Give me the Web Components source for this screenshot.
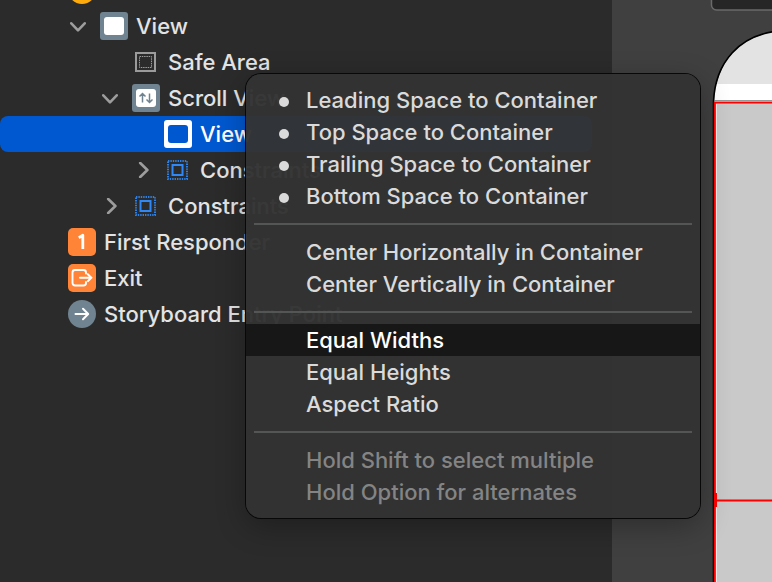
<!DOCTYPE html>
<html lang="en">
<head>
<meta charset="utf-8">
<title>Interface Builder</title>
<style>
html, body { margin: 0; height: 100%; }
body { background: #2b2b2b; font-family: Inter, "Liberation Sans", sans-serif; font-size: 22px; font-weight: 450; overflow: hidden; }
</style>
</head>
<body>
<ib-window>
  <outline-panel slot="outline">
    <outline-row level="1" icon="controller"></outline-row>
    <outline-row level="2" icon="view" state="open">View</outline-row>
    <outline-row level="3" icon="safe">Safe Area</outline-row>
    <outline-row level="3" icon="scroll" state="open">Scroll View</outline-row>
    <outline-row level="4" icon="viewsel" selected>View</outline-row>
    <outline-row level="4" icon="constraints" state="closed">Constraints</outline-row>
    <outline-row level="3" icon="constraints" state="closed">Constraints</outline-row>
    <outline-row level="1" icon="responder">First Responder</outline-row>
    <outline-row level="1" icon="exit">Exit</outline-row>
    <outline-row level="1" icon="entry">Storyboard Entry Point</outline-row>
  </outline-panel>
  <design-canvas slot="canvas"></design-canvas>
  <context-menu slot="menu">
    <menu-item checked>Leading Space to Container</menu-item>
    <menu-item checked>Top Space to Container</menu-item>
    <menu-item checked>Trailing Space to Container</menu-item>
    <menu-item checked>Bottom Space to Container</menu-item>
    <menu-separator></menu-separator>
    <menu-item>Center Horizontally in Container</menu-item>
    <menu-item>Center Vertically in Container</menu-item>
    <menu-separator></menu-separator>
    <menu-item active>Equal Widths</menu-item>
    <menu-item>Equal Heights</menu-item>
    <menu-item>Aspect Ratio</menu-item>
    <menu-separator></menu-separator>
    <menu-item disabled>Hold Shift to select multiple</menu-item>
    <menu-item disabled>Hold Option for alternates</menu-item>
  </context-menu>
</ib-window>
<script>
const define = (name, html, setup) => customElements.define(name, class extends HTMLElement {
  connectedCallback() {
    if (this.shadowRoot) return;
    const root = this.attachShadow({ mode: 'open' });
    root.innerHTML = html;
    if (setup) setup(this, root);
  }
});

define('ib-window', `<style>
:host { display: grid; grid-template-columns: 612px 1fr; height: 100%; position: relative; overflow: hidden; }
slot[name=menu]::slotted(*) { position: absolute; left: 246px; top: 74px; }
</style><slot name="outline"></slot><slot name="canvas"></slot><slot name="menu"></slot>`);

define('outline-panel', `<style>
:host { display: block; background: #2b2b2b; color: #e3e3e3; min-width: 0; }
div { display: flex; flex-direction: column; margin-top: -28px; }
</style><div role="tree"><slot></slot></div>`);

const icons = {
  controller: '<circle cx="14" cy="14" r="14" fill="#fcaa0c"/>',
  view: '<rect width="28" height="28" rx="3" fill="#708390"/><rect x="4" y="5" width="20" height="18" rx="3" fill="#fff"/>',
  viewsel: '<rect width="28" height="28" rx="3" fill="#fff"/><rect x="4" y="5" width="20" height="18" rx="3" fill="#0058d0"/>',
  safe: '<rect x="4" y="5" width="19" height="18" fill="none" stroke="#9b9b9b" stroke-width="2"/><rect x="7.500" y="8.500" width="12" height="11" fill="none" stroke="#9b9b9b" stroke-width="1" stroke-dasharray="1.500 .8"/>',
  scroll: '<rect width="28" height="28" rx="3" fill="#708390"/><rect x="4" y="5" width="20" height="18" rx="3" fill="#fff"/><path d="M10.500 18.500V10M7.500 12.500l3-3 3 3M17.500 9.500V18M14.500 15.500l3 3 3-3" fill="none" stroke="#708390" stroke-width="1.500"/>',
  constraints: '<rect x="4" y="5" width="19" height="18" fill="none" stroke="#2f7fe0" stroke-width="2" stroke-dasharray="1.400 1"/><rect x="8.500" y="9" width="10" height="10" fill="none" stroke="#2f88f5" stroke-width="2"/>',
  responder: '<rect width="28" height="28" rx="5" fill="#ff8438"/><path d="M10.800 9.700l4-2.400V21" fill="none" stroke="#fff" stroke-width="2.800" stroke-linejoin="round"/>',
  exit: '<rect width="28" height="28" rx="5" fill="#ff8438"/><path d="M18 9.500V8.500a2.500 2.500 0 0 0-2.500-2.500H7a2.500 2.500 0 0 0-2.500 2.500v10.500A2.500 2.500 0 0 0 7 21.500h8.500a2.500 2.500 0 0 0 2.500-2.500v-1M12 13.700h11M19.800 10.200l3.600 3.500-3.600 3.500" fill="none" stroke="#fff" stroke-width="1.900" stroke-linecap="round"/>',
  entry: '<circle cx="14" cy="14" r="14" fill="#708390"/><path d="M7.500 14H20M15 8.800l5.200 5.200-5.200 5.200" fill="none" stroke="#fff" stroke-width="2" stroke-linecap="round" stroke-linejoin="round"/>'
};

define('outline-row', `<style>
:host { display: block; }
.row { display: flex; align-items: center; height: 36px; box-sizing: border-box; margin-right: 20px; border-radius: 8px; white-space: nowrap; }
:host([selected]) .row { background: #0058d0; color: #fff; }
.arrow { width: 16px; height: 16px; padding: 0; border: 0; margin-right: 14px; background: none; color: #9d9d9d; flex: none; }
svg { display: block; flex: none; }
.icon { margin-right: 8px; }
</style><div class="row" role="treeitem"><span class="lead"></span><svg class="icon" width="28" height="28" viewBox="0 0 28 28" aria-hidden="true"></svg><span><slot></slot></span></div>`, (host, root) => {
  const level = +host.getAttribute('level');
  const row = root.querySelector('.row');
  const state = host.getAttribute('state');
  row.style.paddingLeft = (36 + level * 32 - (state ? 30 : 0)) + 'px';
  root.querySelector('.icon').innerHTML = icons[host.getAttribute('icon')];
  if (host.hasAttribute('selected')) row.setAttribute('aria-selected', 'true');
  if (state) {
    const d = state === 'open' ? 'M1.300 5.300l6.700 7 6.700-7' : 'M6.200 1l7.200 7-7.200 7';
    root.querySelector('.lead').outerHTML = `<button class="arrow" aria-label="Toggle"><svg width="16" height="16" viewBox="0 0 16 16"><path d="${d}" fill="none" stroke="currentColor" stroke-width="2.600" stroke-linecap="round" stroke-linejoin="round"/></svg></button>`;
  }
});

define('design-canvas', `<style>
:host { display: block; position: relative; background: #404040; overflow: hidden; min-width: 0; }
svg { position: absolute; left: 0; top: 0; width: 100%; height: 100%; }
</style><svg aria-hidden="true">
<rect x="99.500" y="-20" width="300" height="30" rx="5" fill="#262626" stroke="#6a6a6a" stroke-width="1.500"/>
<path d="M102 700V102C104 62 127 34 172 30.500H400V700z" fill="#e3e3e3"/>
<path d="M102 102L104 84H400V102z" fill="#fff"/>
<path d="M102 102H400V700H102z" fill="#c9c9c9"/>
<path d="M102.500 100.500H400" stroke="#999" stroke-width="1"/>
<path d="M101.500 700V102C103 64 126 33 172 30.500" fill="none" stroke="#000" stroke-width="1.600"/>
<path d="M104.500 104V700" stroke="#eee" stroke-width="1"/>
<path d="M400 102.500H102.800V700M103 500.500H400" fill="none" stroke="#f00" stroke-width="2"/>
<rect x="102" y="493" width="3" height="14" fill="#f00"/>
</svg>`);

define('context-menu', `<style>
:host { display: block; box-sizing: border-box; width: 454px; padding: 10px 0; border-radius: 15px; background: rgba(51,51,51,.97); color: #dadada; box-shadow: 0 0 0 1px #080808, 0 8px 30px rgba(0,0,0,.3); }
</style><div role="menu"><slot></slot></div>`);

define('menu-item', `<style>
:host { display: block; }
button { display: flex; align-items: center; width: 100%; height: 32px; padding: 0 8px 0 33px; border: 0; background: none; color: inherit; font: inherit; text-align: left; white-space: nowrap; }
i { width: 10px; height: 10px; border-radius: 50%; margin: 3px 17px 0 0; flex: none; }
:host([checked]) i { background: currentColor; }
:host([active]) button { background: #171717; color: #fff; }
:host([disabled]) button { color: #848484; }
</style><button type="button" role="menuitem"><i></i><span><slot></slot></span></button>`, (host, root) => {
  root.querySelector('button').disabled = host.hasAttribute('disabled');
});

define('menu-separator', `<style>
:host { display: block; padding: 11px 8px; }
hr { margin: 0; border: 0; height: 2px; background: #545555; }
</style><hr>`);
</script>
</body>
</html>
